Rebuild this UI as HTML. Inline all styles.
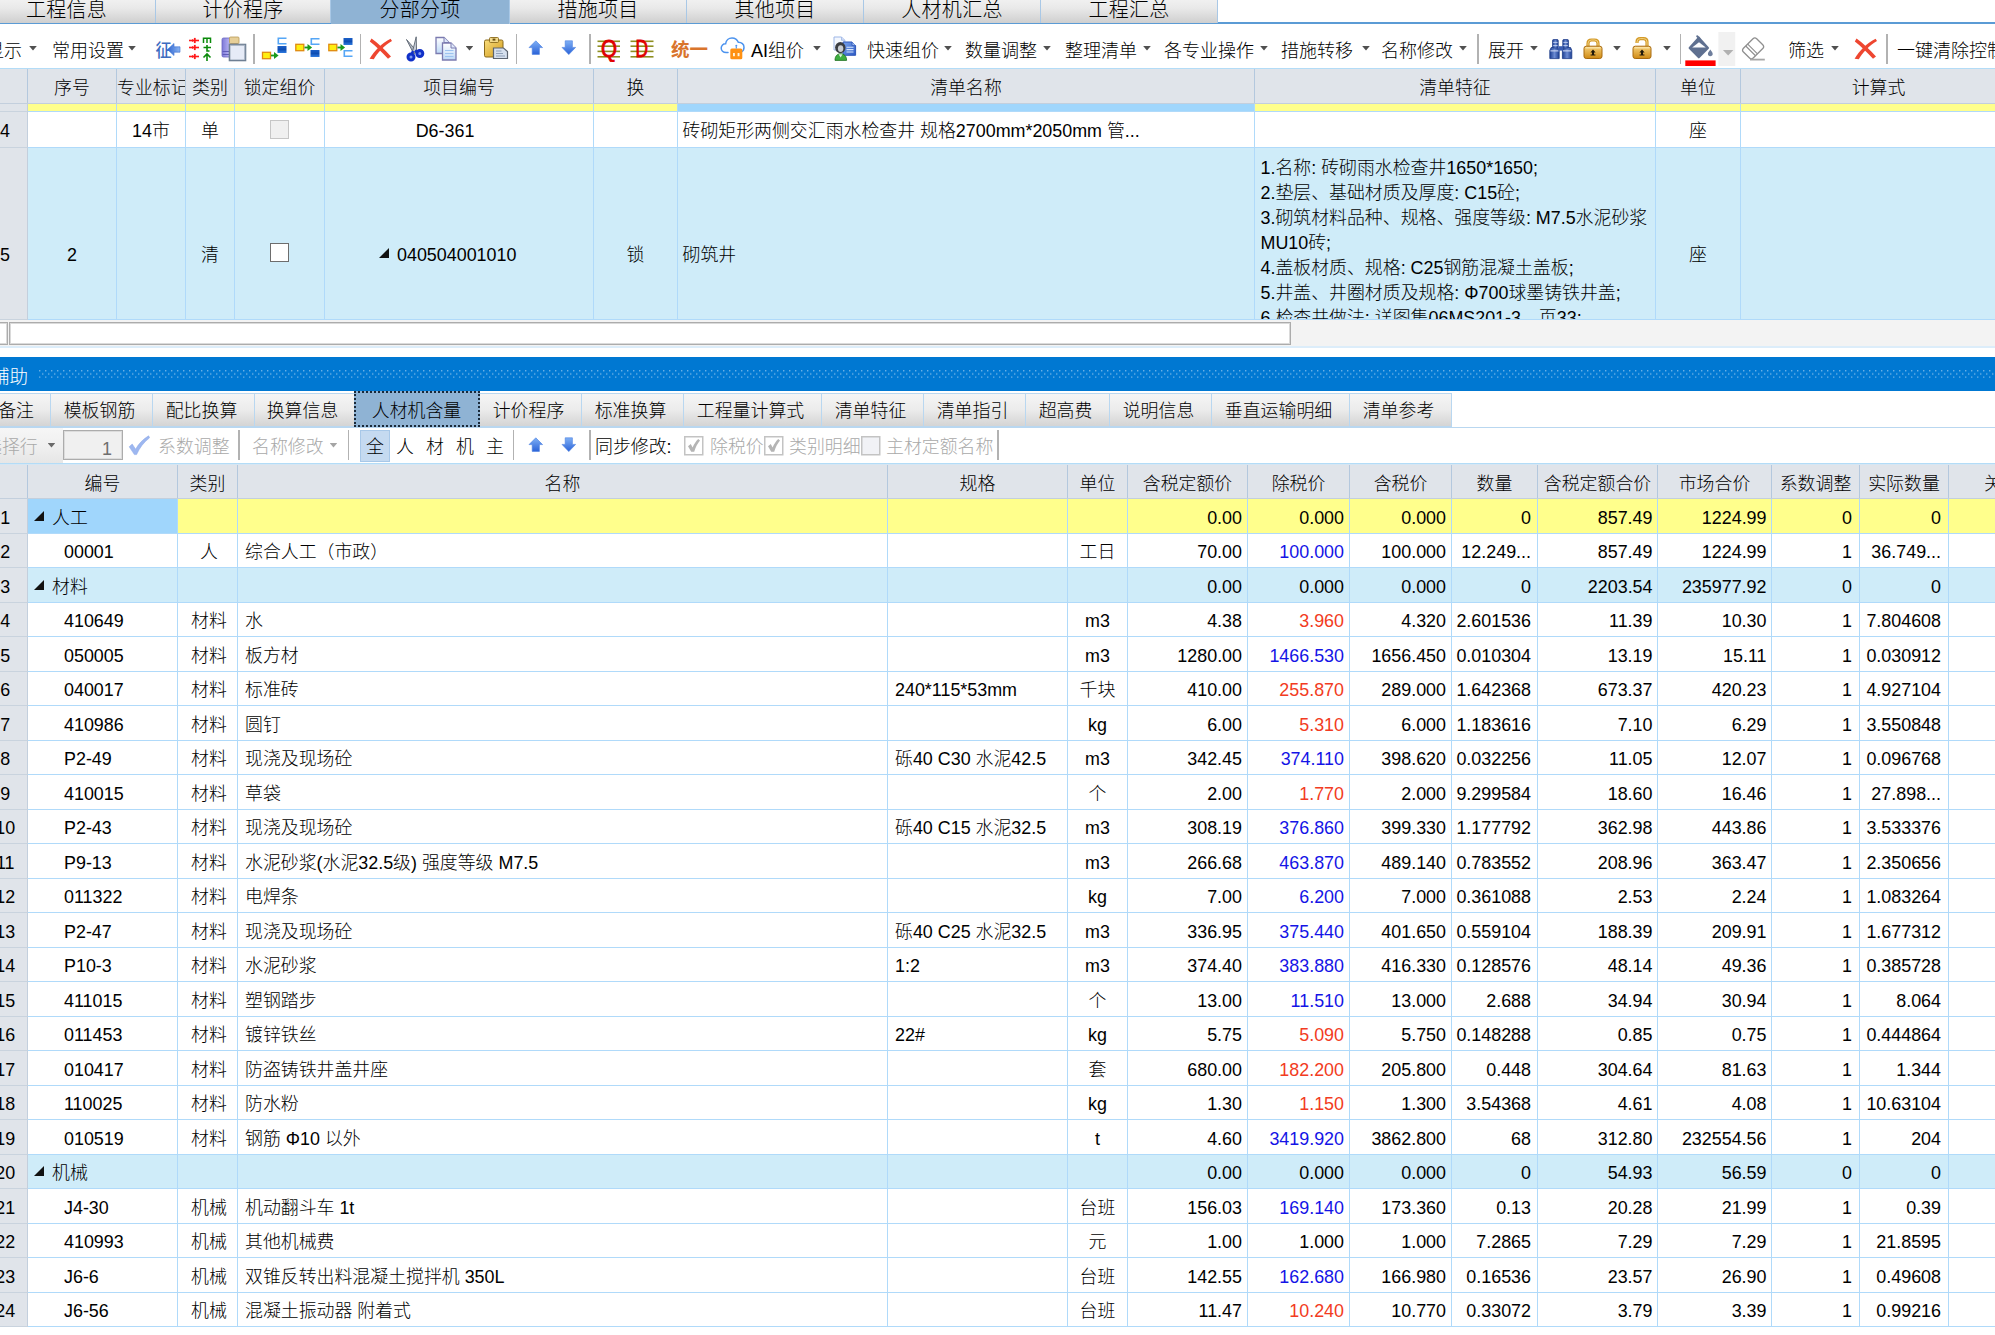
<!DOCTYPE html><html lang="zh-CN"><head><meta charset="utf-8"><title>分部分项</title><style>
*{box-sizing:border-box}
html,body{margin:0;padding:0}
body{width:1995px;height:1335px;overflow:hidden;position:relative;background:#fff;
 font-family:"Liberation Sans","Noto Sans CJK SC",sans-serif;font-size:17.9px;color:#000;line-height:1;font-weight:300}
.abs{position:absolute}
.t{position:absolute;white-space:nowrap}
/* top tabs */
.tab1{position:absolute;top:-4px;height:27px;background:linear-gradient(#f4f4f4,#e9e9e9 45%,#cfcfcf);border-right:1px solid #a9c8e6;
 font-size:20px;text-align:center;line-height:28px;letter-spacing:0.3px}
.tab1.sel{background:#8fb3d4;height:28px}
/* toolbar */
.tb{position:absolute;white-space:nowrap;font-size:18px;line-height:22px}
.dd{position:absolute;width:7.6px;height:4.6px;background:#555;clip-path:polygon(0 0,100% 0,50% 100%)}
.sep{position:absolute;width:2px;background:#b2b2b2}
/* grid */
.hd{position:absolute;background:#e0e4ea;border-right:1px solid #b4c8de;text-align:center;white-space:nowrap;overflow:hidden}
.c{position:absolute;border-right:1px solid #b0dafa;border-bottom:1px solid #b0dafa;white-space:nowrap;overflow:hidden}
.rh{position:absolute;left:0;width:28px;background:#e0e4ea;border-right:1px solid #c3cfdd;border-bottom:1px solid #c9d3de;white-space:nowrap;overflow:hidden}
.r{text-align:right;padding-right:6px}
.l{text-align:left;padding-left:7px}
.m{text-align:center}
.red{color:#f23b22}.blu{color:#1414e6}
.tri{display:inline-block;width:0;height:0;border-left:10px solid transparent;border-bottom:10px solid #111;margin-right:8px;vertical-align:3px}
.tab2{position:absolute;top:393px;height:34px;background:linear-gradient(#f5f5f5,#ececec 48%,#d4d4d4);border:1px solid #b9d7f0;border-left:none;
 text-align:center;line-height:35px;white-space:nowrap;overflow:hidden;padding-right:4px}
.gray{color:#a9a9a9}
</style></head><body>
<div class="abs" style="left:0;top:22px;width:1995px;height:2px;background:#5b9bd5"></div>
<div class="tab1" style="left:-22px;width:178px">工程信息</div>
<div class="tab1" style="left:156px;width:175px">计价程序</div>
<div class="tab1 sel" style="left:331px;width:179px">分部分项</div>
<div class="tab1" style="left:510px;width:177px">措施项目</div>
<div class="tab1" style="left:687px;width:177px">其他项目</div>
<div class="tab1" style="left:864px;width:177px">人材机汇总</div>
<div class="tab1" style="left:1041px;width:177px">工程汇总</div>
<div class="abs" style="left:0;top:68px;width:1995px;height:1px;background:#b3dcf7"></div>
<div class="tb " style="left:-14px;top:40px">显示</div>
<div class="dd" style="left:29.2px;top:46px;background:#505050"></div>
<div class="tb " style="left:52px;top:40px">常用设置</div>
<div class="dd" style="left:128.2px;top:46px;background:#505050"></div>
<div class="sep" style="left:253px;top:34px;height:30px;width:2px"></div>
<div class="sep" style="left:360px;top:34px;height:30px;width:1px"></div>
<div class="sep" style="left:516px;top:34px;height:30px;width:1px"></div>
<div class="sep" style="left:589px;top:34px;height:30px;width:2px"></div>
<div class="dd" style="left:465.7px;top:46px;background:#505050"></div>
<div class="tb" style="left:671px;top:39.3px;color:#d9742c;font-weight:bold;font-size:18.5px">统一</div>
<div class="tb " style="left:751px;top:40px">AI组价</div>
<div class="dd" style="left:813.2px;top:46px;background:#505050"></div>
<div class="tb " style="left:867px;top:40px">快速组价</div>
<div class="dd" style="left:944.2px;top:46px;background:#505050"></div>
<div class="tb " style="left:965px;top:40px">数量调整</div>
<div class="dd" style="left:1043.2px;top:46px;background:#505050"></div>
<div class="tb " style="left:1065px;top:40px">整理清单</div>
<div class="dd" style="left:1143.2px;top:46px;background:#505050"></div>
<div class="tb " style="left:1164px;top:40px">各专业操作</div>
<div class="dd" style="left:1260.2px;top:46px;background:#505050"></div>
<div class="tb " style="left:1281px;top:40px">措施转移</div>
<div class="dd" style="left:1362.2px;top:46px;background:#505050"></div>
<div class="tb " style="left:1381px;top:40px">名称修改</div>
<div class="dd" style="left:1459.2px;top:46px;background:#505050"></div>
<div class="sep" style="left:1477px;top:34px;height:30px;width:2px"></div>
<div class="tb " style="left:1488px;top:40px">展开</div>
<div class="dd" style="left:1530.2px;top:46px;background:#505050"></div>
<div class="dd" style="left:1613.2px;top:46px;background:#505050"></div>
<div class="dd" style="left:1663.2px;top:46px;background:#505050"></div>
<div class="sep" style="left:1680px;top:34px;height:30px;width:1px"></div>
<div class="dd" style="left:1723.2px;top:47px;background:#aaa"></div>
<div class="tb " style="left:1788px;top:40px">筛选</div>
<div class="dd" style="left:1831.2px;top:46px;background:#505050"></div>
<div class="sep" style="left:1886px;top:34px;height:30px;width:2px"></div>
<div class="tb " style="left:1897px;top:40px">一键清除控制价</div>
<svg width="0" height="0" style="position:absolute"><defs>
<linearGradient id="gBlue" x1="0" y1="0" x2="0" y2="1"><stop offset="0" stop-color="#7fb0f5"/><stop offset="1" stop-color="#2a62d8"/></linearGradient>
<linearGradient id="gBlueH" x1="0" y1="0" x2="1" y2="0"><stop offset="0" stop-color="#2f66d0"/><stop offset="1" stop-color="#8ab4f2"/></linearGradient>
<linearGradient id="gGold" x1="0" y1="0" x2="0" y2="1"><stop offset="0" stop-color="#f7d27a"/><stop offset="1" stop-color="#d08a14"/></linearGradient>
<linearGradient id="gGold2" x1="0" y1="0" x2="1" y2="1"><stop offset="0" stop-color="#f9dd7c"/><stop offset="1" stop-color="#d19a1a"/></linearGradient>
<linearGradient id="gBox" x1="0" y1="0" x2="0" y2="1"><stop offset="0" stop-color="#1b5fc8"/><stop offset="0.5" stop-color="#0d4db3"/><stop offset="1" stop-color="#2f7be0"/></linearGradient>
<linearGradient id="gBox2" x1="0" y1="0" x2="1" y2="1"><stop offset="0" stop-color="#7aa4ee"/><stop offset="1" stop-color="#2c59c4"/></linearGradient>
<linearGradient id="gPurp" x1="0" y1="0" x2="1" y2="0"><stop offset="0" stop-color="#7d78d8"/><stop offset="0.5" stop-color="#b7b4f2"/><stop offset="1" stop-color="#8a86d8"/></linearGradient>
<linearGradient id="gBino" x1="0" y1="0" x2="1" y2="0"><stop offset="0" stop-color="#1d3f93"/><stop offset="0.5" stop-color="#6c8bd2"/><stop offset="1" stop-color="#1d3f93"/></linearGradient>
<linearGradient id="gPage" x1="0" y1="0" x2="0" y2="1"><stop offset="0" stop-color="#ffffff"/><stop offset="1" stop-color="#bcd8f6"/></linearGradient>
</defs></svg><svg class="abs" style="left:155px;top:37px" width="27" height="24" viewBox="0 0 27 24" ><text x="0.5" y="19.5" font-size="18" font-weight="500" fill="#3d6cc0" font-family="Liberation Sans,Noto Sans CJK SC,sans-serif" textLength="16" lengthAdjust="spacingAndGlyphs">征</text><path d="M12.5 12.5 L19 6.5 L19 9.8 L25 9.8 L25 15.2 L19 15.2 L19 18.5 Z" fill="url(#gBlueH)" stroke="#3b6fd0" stroke-width="0.6"/></svg><svg class="abs" style="left:188px;top:37px" width="25" height="25" viewBox="0 0 25 25" ><path d="M1 3.5 H11" stroke="#ff1a1a" stroke-width="1.6"/><path d="M6.8 0.8999999999999999 V6.1" stroke="#ff1a1a" stroke-width="1.8"/><path d="M4 1.9 L6.5 3.5 L4 5.1Z" fill="#ff1a1a"/><path d="M1 10.5 H11" stroke="#ff1a1a" stroke-width="1.6"/><path d="M6.8 7.9 V13.1" stroke="#ff1a1a" stroke-width="1.8"/><path d="M4 8.9 L6.5 10.5 L4 12.1Z" fill="#ff1a1a"/><path d="M1 19.5 H11" stroke="#ff1a1a" stroke-width="1.6"/><path d="M6.8 16.9 V22.1" stroke="#ff1a1a" stroke-width="1.8"/><path d="M4 17.9 L6.5 19.5 L4 21.1Z" fill="#ff1a1a"/><path d="M15.5 6 V1.2 H22.5 V6 M19 1.2 V6" stroke="#0a8a0a" stroke-width="1.5" fill="none"/><path d="M15.5 10.5 H23 M19 8 V14 H21.5" stroke="#0a8a0a" stroke-width="1.6" fill="none"/><path d="M19 24 V17 M15.5 20.5 L19 17 L22.5 20.5" stroke="#0a8a0a" stroke-width="1.6" fill="none"/></svg><svg class="abs" style="left:221px;top:36px" width="26" height="26" viewBox="0 0 26 26" ><rect x="1" y="2" width="15" height="19" rx="1.5" fill="url(#gPurp)" stroke="#6a66c0" stroke-width="0.8"/><path d="M1.5 15.5 H12 M1.5 18.5 H12" stroke="#5f5bb8" stroke-width="1"/><rect x="8.5" y="1" width="9.5" height="6.5" rx="1" fill="#e7cf98" stroke="#b79a55" stroke-width="0.8"/><rect x="8.5" y="8.5" width="16" height="16" fill="#e6ebf7" stroke="#6e7f93" stroke-width="1.6"/><path d="M9.3 9.3 H23.7 V23.7" stroke="#a9b4c4" stroke-width="1" fill="none"/></svg><svg class="abs" style="left:261px;top:36px" width="27" height="26" viewBox="0 0 27 26" ><rect x="1.5" y="16.3" width="8" height="6.4" fill="#ffee10" stroke="#e08a10" stroke-width="1.3"/><path d="M10 19.5 H14" stroke="#1a9a1a" stroke-width="1.8"/><path d="M13 15.9 L17.6 19.5 L13 23.1Z" fill="#1a9a1a"/><path d="M25.5 2.3 H17.3 V7.7 H25.5" fill="none" stroke="#55a6f6" stroke-width="1.6"/><rect x="16.5" y="10" width="9" height="7" fill="url(#gBox)"/></svg><svg class="abs" style="left:294px;top:36px" width="27" height="26" viewBox="0 0 27 26" ><rect x="1.8" y="8.3" width="8" height="6.4" fill="#ffee10" stroke="#e08a10" stroke-width="1.3"/><path d="M10.5 11.5 H14.5" stroke="#1a9a1a" stroke-width="1.8"/><path d="M13.5 7.9 L18.1 11.5 L13.5 15.1Z" fill="#1a9a1a"/><path d="M25.5 2.8 H17.3 V8.2 H25.5" fill="none" stroke="#55a6f6" stroke-width="1.6"/><rect x="16.5" y="14" width="9" height="7" fill="url(#gBox)"/></svg><svg class="abs" style="left:327px;top:36px" width="27" height="26" viewBox="0 0 27 26" ><rect x="1.8" y="8.3" width="8" height="6.4" fill="#ffee10" stroke="#e08a10" stroke-width="1.3"/><path d="M10.5 11.5 H14.5" stroke="#1a9a1a" stroke-width="1.8"/><path d="M13.5 7.9 L18.1 11.5 L13.5 15.1Z" fill="#1a9a1a"/><rect x="16.5" y="2" width="9" height="7" fill="url(#gBox)"/><path d="M25.5 14.8 H17.3 V20.2 H25.5" fill="none" stroke="#55a6f6" stroke-width="1.6"/></svg><svg class="abs" style="left:369px;top:37px" width="24" height="23" viewBox="0 0 24 23" ><path d="M2.5 1.5 C9 6 16 13 22 19.5 L19 21.8 C13 15.5 7 9.5 0.8 4.6 Z" fill="#ee4630"/><path d="M23 4 C15.5 8.5 8 16 4.8 22.3 L0.6 21.8 C5.5 13.5 13 6 21.6 1.8 Z" fill="#ee4630"/></svg><svg class="abs" style="left:404px;top:36px" width="21" height="26" viewBox="0 0 21 26" ><path d="M2.5 3.5 L13 15.5 L9.8 17.8 Z" fill="#aeb6c2" stroke="#5b6470" stroke-width="0.9"/><path d="M12.2 0.8 L12.6 16 L8.4 16 Z" fill="#c8ced8" stroke="#5b6470" stroke-width="0.9"/><circle cx="7" cy="21" r="3" fill="#7d9af0" stroke="#1030c8" stroke-width="3"/><circle cx="15.8" cy="17.5" r="3" fill="#7d9af0" stroke="#1030c8" stroke-width="3"/><path d="M9 15 L7.5 18.5 M11 14.5 L13.5 16.5" stroke="#1030c8" stroke-width="2.4"/></svg><svg class="abs" style="left:435px;top:36px" width="23" height="26" viewBox="0 0 23 26" ><path d="M1 1.5 H9 L14 6.5 V17.5 H1 Z" fill="url(#gPage)" stroke="#7b7bb0" stroke-width="1.3"/><path d="M9 1.5 V6.5 H14" fill="#dfe9fb" stroke="#7b7bb0" stroke-width="1"/><path d="M7.5 7 H16.0 L21.0 12 V24 H7.5 Z" fill="url(#gPage)" stroke="#7b7bb0" stroke-width="1.3"/><path d="M16.0 7 V12 H21.0" fill="#dfe9fb" stroke="#7b7bb0" stroke-width="1"/><path d="M10 14.5 H18.5 M10 17.5 H18.5 M10 20.5 H18.5" stroke="#9cc3f0" stroke-width="1.2"/></svg><svg class="abs" style="left:483px;top:36px" width="26" height="25" viewBox="0 0 26 25" ><rect x="1.5" y="4" width="18.5" height="17" rx="1.5" fill="url(#gGold2)" stroke="#8a6a1a" stroke-width="1"/><rect x="6.5" y="1.5" width="9" height="5" rx="1" fill="#f1d98a" stroke="#8a6a1a" stroke-width="0.9"/><rect x="9.6" y="2.6" width="2.8" height="2" fill="#6b5010"/><path d="M10.5 12 H20.5 L24.5 15.5 V22.5 H10.5 Z" fill="#d6e0ee" stroke="#5c6470" stroke-width="1.2"/><path d="M13 15 H18.5 M13 17.5 H20 M13 20 H22" stroke="#8fa0b8" stroke-width="1"/></svg><svg class="abs" style="left:528px;top:40.2px" width="16" height="15" viewBox="0 0 16 15" ><path d="M7.8 0.8 L14.6 7.6 H11.4 V14.4 H4.2 V7.6 H1 Z" fill="url(#gBlue)" stroke="#4a7fe0" stroke-width="0.6"/></svg><svg class="abs" style="left:561px;top:40.2px" width="16" height="15" viewBox="0 0 16 15" ><path d="M7.8 14.6 L14.6 7.4 H11.4 V0.8 H4.2 V7.4 H1 Z" fill="url(#gBlue)" stroke="#4a7fe0" stroke-width="0.6"/></svg><svg class="abs" style="left:597px;top:36px" width="24" height="26" viewBox="0 0 24 26" ><path d="M0.5 5.3 H23" stroke="#8e8e20" stroke-width="1.6"/><path d="M0.5 10.2 H23" stroke="#8e8e20" stroke-width="1.6"/><path d="M0.5 15.4 H23" stroke="#8e8e20" stroke-width="1.6"/><path d="M0.5 20.8 H23" stroke="#8e8e20" stroke-width="1.6"/><text x="4" y="20.6" font-size="23.5" font-weight="normal" stroke="#e00000" stroke-width="0.9" fill="#e00000" font-family="Liberation Sans,sans-serif" textLength="16" lengthAdjust="spacingAndGlyphs">Q</text></svg><svg class="abs" style="left:630px;top:36px" width="24" height="26" viewBox="0 0 24 26" ><path d="M0.5 5.3 H23.5" stroke="#8e8e20" stroke-width="1.6"/><path d="M0.5 10.2 H23.5" stroke="#8e8e20" stroke-width="1.6"/><path d="M0.5 15.4 H23.5" stroke="#8e8e20" stroke-width="1.6"/><path d="M0.5 20.8 H23.5" stroke="#8e8e20" stroke-width="1.6"/><text x="5.5" y="20.6" font-size="23.5" font-weight="normal" stroke="#e00000" stroke-width="0.9" fill="#e00000" font-family="Liberation Sans,sans-serif" textLength="12.5" lengthAdjust="spacingAndGlyphs">D</text></svg><svg class="abs" style="left:719.7px;top:36px" width="26" height="25" viewBox="0 0 26 25" ><path d="M8 16.5 H6.2 C3 16.5 1.2 14.3 1.2 12 C1.2 9.5 3.2 7.7 5.6 7.8 C6 4.3 8.8 2 12 2 C15 2 17.3 3.7 18.3 6.3 C21.6 6.2 24 8.4 24 11.3 C24 13.6 22.6 15.3 21.6 15.8" fill="none" stroke="#4c93ee" stroke-width="1.5" stroke-linecap="round"/><rect x="10.3" y="12.6" width="12" height="10.6" rx="1.5" fill="#ff9112"/><path d="M16.3 12.6 V10.4" stroke="#4c93ee" stroke-width="1.2"/><circle cx="16.3" cy="9.8" r="1" fill="#4c93ee"/><rect x="13" y="17" width="1.9" height="3.2" fill="#fff3da"/><rect x="17.6" y="17" width="1.9" height="3.2" fill="#fff3da"/></svg><svg class="abs" style="left:832px;top:35px" width="26" height="26" viewBox="0 0 26 26" ><path d="M2 2 H9.5 L12.8 5.3 V15 H2 Z" fill="#f3f7fe" stroke="#9db6e6" stroke-width="1"/><path d="M9.5 2 V5.3 H12.8" fill="#cfdcf6" stroke="#9db6e6" stroke-width="0.8"/><path d="M11 7 H20 L23.6 10.6 V20.3 H11 Z" fill="url(#gBox2)" stroke="#2f57b8" stroke-width="1"/><path d="M20 7 V10.6 H23.6" fill="#9dbbf0" stroke="#2f57b8" stroke-width="0.8"/><path d="M14.5 12.2 H21.5 M14.5 14.6 H21.5 M14.5 17 H21.5" stroke="#d8e6fb" stroke-width="1.1"/><ellipse cx="8.3" cy="12.6" rx="5.2" ry="5.6" fill="#3a3d42"/><ellipse cx="8.6" cy="13.6" rx="2.7" ry="3.4" fill="#c9cdd2"/><path d="M3 25.4 C3 21 5.2 18.8 8.6 18.8 C12 18.8 14.6 21 14.6 25.4 Z" fill="#3fae40" stroke="#1e6e20" stroke-width="0.8"/><path d="M6.6 19.2 L8.6 22.4 L10.6 19.2" fill="#dff3dc"/></svg><svg class="abs" style="left:1548.7px;top:38px" width="24" height="22" viewBox="0 0 24 22" ><path d="M2.2 9.5 H9.0 L10.2 12.5 V20.6 H0.8 V12.5 Z" fill="url(#gBino)" stroke="#1b3a88" stroke-width="0.8"/><rect x="3.6" y="1.6" width="5.6" height="8.4" rx="0.8" fill="url(#gBino)" stroke="#1b3a88" stroke-width="0.8"/><path d="M4.2 4.4 H8.6 M4.2 7.6 H8.6" stroke="#c9d6f4" stroke-width="0.9"/><path d="M1.4 12.9 H9.6" stroke="#dbe4f8" stroke-width="1"/><path d="M14.799999999999999 9.5 H21.6 L22.799999999999997 12.5 V20.6 H13.399999999999999 V12.5 Z" fill="url(#gBino)" stroke="#1b3a88" stroke-width="0.8"/><rect x="13.8" y="1.6" width="5.6" height="8.4" rx="0.8" fill="url(#gBino)" stroke="#1b3a88" stroke-width="0.8"/><path d="M14.4 4.4 H18.8 M14.4 7.6 H18.8" stroke="#c9d6f4" stroke-width="0.9"/><path d="M14.0 12.9 H22.2" stroke="#dbe4f8" stroke-width="1"/><rect x="9.4" y="8.2" width="4.6" height="4.4" fill="#3a5cb0"/></svg><svg class="abs" style="left:1583px;top:37.6px" width="21" height="22" viewBox="0 0 21 22" ><path d="M5 9 V5.4 Q5 2 8.4 2 H11.6 Q15 2 15 5.4 V9" fill="none" stroke="#d39a28" stroke-width="3.2"/><path d="M5 9 V5.4 Q5 2 8.4 2 H11.6 Q15 2 15 5.4 V9" fill="none" stroke="#f5d78a" stroke-width="0.9"/><rect x="1" y="8.2" width="18" height="12.3" rx="2.2" fill="url(#gGold)" stroke="#a86a10" stroke-width="1"/><path d="M2.6 9.799999999999999 H17.4" stroke="#fbe7ae" stroke-width="1.2"/><path d="M10 11.399999999999999 L12.6 14.399999999999999 H11 V16.4 H12.4 V17.6 H7.6 V16.4 H9 V14.399999999999999 H7.4 Z" fill="#20180a"/></svg><svg class="abs" style="left:1632px;top:36.6px" width="21" height="23" viewBox="0 0 21 23" ><path d="M15 10 V5 Q15 1.6 11.6 1.6 H8.4 Q5 1.6 5 5 V6" fill="none" stroke="#d39a28" stroke-width="3.2"/><path d="M15 10 V5 Q15 1.6 11.6 1.6 H8.4 Q5 1.6 5 5 V6" fill="none" stroke="#f5d78a" stroke-width="0.9"/><rect x="1" y="9.2" width="18" height="12.3" rx="2.2" fill="url(#gGold)" stroke="#a86a10" stroke-width="1"/><path d="M2.6 10.799999999999999 H17.4" stroke="#fbe7ae" stroke-width="1.2"/><path d="M10 12.399999999999999 L12.6 15.399999999999999 H11 V17.4 H12.4 V18.6 H7.6 V17.4 H9 V15.399999999999999 H7.4 Z" fill="#20180a"/></svg><svg class="abs" style="left:1685px;top:32px" width="51" height="34" viewBox="0 0 51 34" ><rect x="33.4" y="0" width="16.8" height="34" fill="#f1f1f1"/><path d="M13.8 5.6 L23 16 L13.8 25.4 L4.6 16 Z" fill="#5f7090" stroke="#5f7090" stroke-width="2" stroke-linejoin="round"/><path d="M14 10.2 L20.8 15.4 H7.2 Z" fill="#fbfcfe"/><path d="M12.2 4.2 L14.4 6.4" stroke="#5f7090" stroke-width="2" stroke-linecap="round"/><path d="M25.3 17.6 C26.8 19.8 27.7 20.8 27.7 22 C27.7 23.3 26.7 24.2 25.3 24.2 C23.9 24.2 22.9 23.3 22.9 22 C22.9 20.8 23.8 19.8 25.3 17.6 Z" fill="#6e7e9c"/><rect x="0.3" y="28.4" width="30.3" height="5.6" fill="#ff0000"/><path d="M37.9 18 H48.4 L43.15 23.6 Z" fill="#b1b1b1"/></svg><svg class="abs" style="left:1740px;top:36px" width="26" height="26" viewBox="0 0 26 26" ><g transform="rotate(-45 13.1 12.4)"><rect x="3.75" y="5.5" width="18.7" height="13.8" rx="2.6" fill="#fff" stroke="#8f8f8f" stroke-width="1.3"/><path d="M9.6 5.5 V19.3 M12.4 5.5 V19.3" stroke="#8f8f8f" stroke-width="1.1"/></g><path d="M10 23.6 H24.8" stroke="#a6a6a6" stroke-width="1.8"/></svg><svg class="abs" style="left:1854px;top:37px" width="24" height="23" viewBox="0 0 24 23" ><path d="M2.5 1.5 C9 6 16 13 22 19.5 L19 21.8 C13 15.5 7 9.5 0.8 4.6 Z" fill="#ee4630"/><path d="M23 4 C15.5 8.5 8 16 4.8 22.3 L0.6 21.8 C5.5 13.5 13 6 21.6 1.8 Z" fill="#ee4630"/></svg>
<div class="abs" style="left:0;top:69px;width:1995px;height:35px;background:#e0e4ea;border-bottom:1px solid #c3cfdd"></div>
<div class="hd" style="left:0px;top:69px;width:28px;height:34px;line-height:39px;"></div>
<div class="hd" style="left:28px;top:69px;width:89px;height:34px;line-height:39px;">序号</div>
<div class="hd" style="left:117px;top:69px;width:69px;height:34px;line-height:39px;text-align:left;">专业标记</div>
<div class="hd" style="left:186px;top:69px;width:49px;height:34px;line-height:39px;">类别</div>
<div class="hd" style="left:235px;top:69px;width:90px;height:34px;line-height:39px;">锁定组价</div>
<div class="hd" style="left:325px;top:69px;width:269px;height:34px;line-height:39px;">项目编号</div>
<div class="hd" style="left:594px;top:69px;width:84px;height:34px;line-height:39px;">换</div>
<div class="hd" style="left:678px;top:69px;width:577px;height:34px;line-height:39px;">清单名称</div>
<div class="hd" style="left:1255px;top:69px;width:401px;height:34px;line-height:39px;">清单特征</div>
<div class="hd" style="left:1656px;top:69px;width:85px;height:34px;line-height:39px;">单位</div>
<div class="hd" style="left:1741px;top:69px;width:276px;height:34px;line-height:39px;">计算式</div>
<div class="rh" style="top:104px;height:8px;line-height:8px"></div>
<div class="c " style="left:28px;top:104px;width:89px;height:8px;line-height:8px;background:#ffff8c;"></div>
<div class="c " style="left:117px;top:104px;width:69px;height:8px;line-height:8px;background:#ffff8c;"></div>
<div class="c " style="left:186px;top:104px;width:49px;height:8px;line-height:8px;background:#ffff8c;"></div>
<div class="c " style="left:235px;top:104px;width:90px;height:8px;line-height:8px;background:#ffff8c;"></div>
<div class="c " style="left:325px;top:104px;width:269px;height:8px;line-height:8px;background:#ffff8c;"></div>
<div class="c " style="left:594px;top:104px;width:84px;height:8px;line-height:8px;background:#ffff8c;"></div>
<div class="c " style="left:678px;top:104px;width:577px;height:8px;line-height:8px;background:#ffff8c;background:#a0d6fc"></div>
<div class="c " style="left:1255px;top:104px;width:401px;height:8px;line-height:8px;background:#ffff8c;"></div>
<div class="c " style="left:1656px;top:104px;width:85px;height:8px;line-height:8px;background:#ffff8c;"></div>
<div class="c " style="left:1741px;top:104px;width:276px;height:8px;line-height:8px;background:#ffff8c;"></div>
<div class="rh" style="top:112px;height:36px;line-height:39px">4</div>
<div class="c m" style="left:28px;top:112px;width:89px;height:36px;line-height:39px;background:#fff;"></div>
<div class="c m" style="left:117px;top:112px;width:69px;height:36px;line-height:39px;background:#fff;">14市</div>
<div class="c m" style="left:186px;top:112px;width:49px;height:36px;line-height:39px;background:#fff;">单</div>
<div class="c m" style="left:235px;top:112px;width:90px;height:36px;line-height:39px;background:#fff;"><span style="display:inline-block;width:18.5px;height:18.5px;border:1px solid #c6c6c6;background:#f0f0f0;vertical-align:-1.5px"></span></div>
<div class="c m" style="left:325px;top:112px;width:269px;height:36px;line-height:39px;background:#fff;padding-right:28px;">D6-361</div>
<div class="c m" style="left:594px;top:112px;width:84px;height:36px;line-height:39px;background:#fff;"></div>
<div class="c l" style="left:678px;top:112px;width:577px;height:36px;line-height:39px;background:#fff;padding-left:4.5px;">砖砌矩形两侧交汇雨水检查井 规格2700mm*2050mm 管...</div>
<div class="c l" style="left:1255px;top:112px;width:401px;height:36px;line-height:39px;background:#fff;"></div>
<div class="c m" style="left:1656px;top:112px;width:85px;height:36px;line-height:39px;background:#fff;">座</div>
<div class="c " style="left:1741px;top:112px;width:276px;height:36px;line-height:39px;background:#fff;"></div>
<div class="rh" style="top:148px;height:172px;line-height:215px">5</div>
<div class="c m" style="left:28px;top:148px;width:89px;height:172px;line-height:215px;background:#cfecf9;">2</div>
<div class="c m" style="left:117px;top:148px;width:69px;height:172px;line-height:215px;background:#cfecf9;"></div>
<div class="c m" style="left:186px;top:148px;width:49px;height:172px;line-height:215px;background:#cfecf9;">清</div>
<div class="c m" style="left:235px;top:148px;width:90px;height:172px;line-height:215px;background:#cfecf9;"><span style="display:inline-block;width:18.5px;height:18.5px;border:1px solid #6d6d6d;background:#fff;vertical-align:-0.5px"></span></div>
<div class="c l" style="left:325px;top:148px;width:269px;height:172px;line-height:215px;background:#cfecf9;padding-left:54px;"><span class="tri" style="margin-right:8px"></span>040504001010</div>
<div class="c m" style="left:594px;top:148px;width:84px;height:172px;line-height:215px;background:#cfecf9;">锁</div>
<div class="c l" style="left:678px;top:148px;width:577px;height:172px;line-height:215px;background:#cfecf9;padding-left:4.5px;">砌筑井</div>
<div class="c l" style="left:1255px;top:148px;width:401px;height:172px;line-height:215px;background:#cfecf9;line-height:25px;padding-left:5.5px;"><div style="line-height:25.1px;padding-top:7.5px;white-space:nowrap">1.名称: 砖砌雨水检查井1650*1650;<br>2.垫层、基础材质及厚度: C15砼;<br>3.砌筑材料品种、规格、强度等级: M7.5水泥砂浆<br>MU10砖;<br>4.盖板材质、规格: C25钢筋混凝土盖板;<br>5.井盖、井圈材质及规格: Φ700球墨铸铁井盖;<br>6.检查井做法: 详图集06MS201-3、页33;<br>7.其他</div></div>
<div class="c m" style="left:1656px;top:148px;width:85px;height:172px;line-height:215px;background:#cfecf9;">座</div>
<div class="c " style="left:1741px;top:148px;width:276px;height:172px;line-height:215px;background:#cfecf9;"></div>
<div class="abs" style="left:0;top:320px;width:1995px;height:28px;background:#f3f3f3;border-bottom:2px solid #dcedfa"></div>
<div class="abs" style="left:-4px;top:322px;width:12px;height:23px;background:#fff;border:1px solid #acacac;box-shadow:inset 0 0 0 1px #dadada"></div>
<div class="abs" style="left:9px;top:322px;width:1282px;height:23px;background:#fff;border:1px solid #acacac;box-shadow:inset 0 0 0 1px #dadada"></div>
<div class="abs" style="left:0;top:357px;width:1995px;height:34px;background:#0078d2"></div>
<svg class="abs" style="left:39px;top:370px" width="1956" height="8"><defs><pattern id="dots" width="6" height="6.5" patternUnits="userSpaceOnUse"><rect x="0" y="0" width="1.4" height="1.4" fill="#fff" fill-opacity=".42"/><rect x="3" y="3.25" width="1.4" height="1.4" fill="#fff" fill-opacity=".42"/></pattern></defs><rect width="1956" height="8" fill="url(#dots)"/></svg>
<div class="t" style="left:-9px;top:368px;color:#fff;font-size:18.5px">辅助</div>
<div class="abs" style="left:0;top:427px;width:1995px;height:1px;background:#b9d7f0"></div>
<div class="tab2" style="left:-40px;width:91px;text-align:right;padding-right:16px">备注</div>
<div class="tab2" style="left:51px;width:102px">模板钢筋</div>
<div class="tab2" style="left:153px;width:102px">配比换算</div>
<div class="tab2" style="left:255px;width:100px">换算信息</div>
<div class="tab2" style="left:354px;width:126px;top:391px;height:36px;background:#8fb3d4;border:2px dotted #1a2a3a;line-height:37px;z-index:2;padding-right:1px">人材机含量</div>
<div class="tab2" style="left:480px;width:102px">计价程序</div>
<div class="tab2" style="left:582px;width:102px">标准换算</div>
<div class="tab2" style="left:684px;width:138px">工程量计算式</div>
<div class="tab2" style="left:822px;width:102px">清单特征</div>
<div class="tab2" style="left:924px;width:102px">清单指引</div>
<div class="tab2" style="left:1026px;width:84px">超高费</div>
<div class="tab2" style="left:1110px;width:102px">说明信息</div>
<div class="tab2" style="left:1212px;width:138px">垂直运输明细</div>
<div class="tab2" style="left:1350px;width:102px">清单参考</div>
<div class="abs" style="left:0;top:463px;width:1995px;height:1px;background:#b3dcf7"></div>
<div class="abs" style="left:0;top:428px;width:63px;height:35px;background:linear-gradient(#f6f6f6,#f0f0f0 50%,#e6e6e6)"></div>
<div class="t gray" style="left:-16px;top:439px">选择行</div>
<div class="dd" style="left:47.7px;top:443px;background:#6a6a6a"></div>
<div class="abs" style="left:63px;top:430px;width:60px;height:30px;background:#f0f0f0;border:1px solid #acacac;box-shadow:inset 0 0 0 1px #dcdcdc;text-align:right;padding:10px 10px 0 0;color:#6e6e6e">1</div>
<div class="t gray" style="left:158px;top:439px">系数调整</div>
<div class="sep" style="left:238px;top:430px;height:30px;width:2px"></div>
<div class="t gray" style="left:252px;top:439px">名称修改</div>
<div class="dd" style="left:329.7px;top:443px;background:#a5a5a5"></div>
<div class="sep" style="left:348px;top:430px;height:30px;width:1px"></div>
<div class="abs" style="left:360px;top:430px;width:30px;height:32px;background:#c5daf0;border:1px solid #a8c8e8"></div>
<div class="t" style="left:366px;top:439px">全</div>
<div class="t" style="left:396px;top:439px">人</div>
<div class="t" style="left:426px;top:439px">材</div>
<div class="t" style="left:456px;top:439px">机</div>
<div class="t" style="left:486px;top:439px">主</div>
<div class="sep" style="left:513px;top:430px;height:30px;width:1px"></div>
<div class="sep" style="left:589px;top:430px;height:30px;width:2px"></div>
<div class="t" style="left:595px;top:439px">同步修改:</div>
<div class="t gray" style="left:710px;top:439px">除税价</div>
<div class="t gray" style="left:789px;top:439px">类别明细</div>
<div class="t gray" style="left:886px;top:439px">主材定额名称</div>
<div class="sep" style="left:997px;top:430px;height:30px;width:2px"></div>
<svg class="abs" style="left:128px;top:435px" width="23" height="21" viewBox="0 0 23 21" ><path d="M1.2 11.8 L4.2 9 L7.6 14.2 C10.5 8.8 15 4.2 20.6 0.8 L21.6 2.8 C16 7 11.5 12.8 8.6 19.6 L6.4 19.6 Z" fill="#9db7f0" stroke="#8aa6e6" stroke-width="0.5"/></svg><svg class="abs" style="left:528px;top:437.2px" width="16" height="15" viewBox="0 0 16 15" ><path d="M7.8 0.8 L14.6 7.6 H11.4 V14.4 H4.2 V7.6 H1 Z" fill="url(#gBlue)" stroke="#4a7fe0" stroke-width="0.6"/></svg><svg class="abs" style="left:561px;top:437.2px" width="16" height="15" viewBox="0 0 16 15" ><path d="M7.8 14.6 L14.6 7.4 H11.4 V0.8 H4.2 V7.4 H1 Z" fill="url(#gBlue)" stroke="#4a7fe0" stroke-width="0.6"/></svg><svg class="abs" style="left:684px;top:435.5px" width="20" height="20" viewBox="0 0 20 20" ><rect x="0.75" y="0.75" width="18" height="18" fill="#fff" stroke="#c3c3c3" stroke-width="1.5"/><path d="M4 10.2 L6.8 8 L8.6 11.4 C10 8.2 11.8 5.4 14.2 3 L16 4.6 C13.4 7.8 11.6 11.2 10.2 15.8 L7.2 15.8 Z" fill="#b4b4b4"/></svg><svg class="abs" style="left:763.5px;top:435.5px" width="20" height="20" viewBox="0 0 20 20" ><rect x="0.75" y="0.75" width="18" height="18" fill="#fff" stroke="#c3c3c3" stroke-width="1.5"/><path d="M4 10.2 L6.8 8 L8.6 11.4 C10 8.2 11.8 5.4 14.2 3 L16 4.6 C13.4 7.8 11.6 11.2 10.2 15.8 L7.2 15.8 Z" fill="#b4b4b4"/></svg><svg class="abs" style="left:861px;top:435.5px" width="20" height="20" viewBox="0 0 20 20" ><rect x="0.75" y="0.75" width="18" height="18" fill="#f1f2f6" stroke="#c3c3c3" stroke-width="1.5"/></svg>
<div class="abs" style="left:0;top:464px;width:1995px;height:35px;background:#e0e4ea;border-bottom:1px solid #c3cfdd;border-top:1px solid #d6e6f3"></div>
<div class="hd" style="left:0px;top:465px;width:28px;height:33px;line-height:39px;"></div>
<div class="hd" style="left:28px;top:465px;width:150px;height:33px;line-height:39px;">编号</div>
<div class="hd" style="left:178px;top:465px;width:60px;height:33px;line-height:39px;">类别</div>
<div class="hd" style="left:238px;top:465px;width:650px;height:33px;line-height:39px;">名称</div>
<div class="hd" style="left:888px;top:465px;width:180px;height:33px;line-height:39px;">规格</div>
<div class="hd" style="left:1068px;top:465px;width:60px;height:33px;line-height:39px;">单位</div>
<div class="hd" style="left:1128px;top:465px;width:120px;height:33px;line-height:39px;">含税定额价</div>
<div class="hd" style="left:1248px;top:465px;width:102px;height:33px;line-height:39px;">除税价</div>
<div class="hd" style="left:1350px;top:465px;width:102px;height:33px;line-height:39px;">含税价</div>
<div class="hd" style="left:1452px;top:465px;width:86px;height:33px;line-height:39px;">数量</div>
<div class="hd" style="left:1538px;top:465px;width:120px;height:33px;line-height:39px;">含税定额合价</div>
<div class="hd" style="left:1658px;top:465px;width:114px;height:33px;line-height:39px;">市场合价</div>
<div class="hd" style="left:1772px;top:465px;width:88px;height:33px;line-height:39px;">系数调整</div>
<div class="hd" style="left:1860px;top:465px;width:89px;height:33px;line-height:39px;">实际数量</div>
<div class="hd" style="left:1949px;top:465px;width:92px;height:33px;line-height:39px;text-align:left;padding-left:35px;">关联</div>
<div class="rh" style="top:499px;height:35px;line-height:38px;text-align:right;padding-right:9px"><span style="position:absolute;left:-14.8px;width:40px;text-align:center">1</span></div>
<div class="c l" style="left:28px;top:499px;width:150px;height:35px;line-height:38px;background:#ffff8c;padding-left:6px;background:#a0d6fc;"><span class="tri"></span>人工</div>
<div class="c m" style="left:178px;top:499px;width:60px;height:35px;line-height:38px;background:#ffff8c;padding-left:3px;"></div>
<div class="c l" style="left:238px;top:499px;width:650px;height:35px;line-height:38px;background:#ffff8c;"></div>
<div class="c l" style="left:888px;top:499px;width:180px;height:35px;line-height:38px;background:#ffff8c;"></div>
<div class="c m" style="left:1068px;top:499px;width:60px;height:35px;line-height:38px;background:#ffff8c;"></div>
<div class="c r" style="left:1128px;top:499px;width:120px;height:35px;line-height:38px;background:#ffff8c;padding-right:5px;">0.00</div>
<div class="c r" style="left:1248px;top:499px;width:102px;height:35px;line-height:38px;background:#ffff8c;padding-right:5px;">0.000</div>
<div class="c r" style="left:1350px;top:499px;width:102px;height:35px;line-height:38px;background:#ffff8c;padding-right:5px;">0.000</div>
<div class="c r" style="left:1452px;top:499px;width:86px;height:35px;line-height:38px;background:#ffff8c;">0</div>
<div class="c r" style="left:1538px;top:499px;width:120px;height:35px;line-height:38px;background:#ffff8c;padding-right:4.5px;">857.49</div>
<div class="c r" style="left:1658px;top:499px;width:114px;height:35px;line-height:38px;background:#ffff8c;padding-right:4.5px;">1224.99</div>
<div class="c r" style="left:1772px;top:499px;width:88px;height:35px;line-height:38px;background:#ffff8c;padding-right:7px;">0</div>
<div class="c r" style="left:1860px;top:499px;width:89px;height:35px;line-height:38px;background:#ffff8c;padding-right:7px;">0</div>
<div class="c r" style="left:1949px;top:499px;width:92px;height:35px;line-height:38px;background:#ffff8c;"></div>
<div class="rh" style="top:534px;height:34px;line-height:37px;text-align:right;padding-right:9px"><span style="position:absolute;left:-14.8px;width:40px;text-align:center">2</span></div>
<div class="c l" style="left:28px;top:534px;width:150px;height:34px;line-height:37px;background:#fff;padding-left:36px;">00001</div>
<div class="c m" style="left:178px;top:534px;width:60px;height:34px;line-height:37px;background:#fff;padding-left:3px;">人</div>
<div class="c l" style="left:238px;top:534px;width:650px;height:34px;line-height:37px;background:#fff;">综合人工（市政）</div>
<div class="c l" style="left:888px;top:534px;width:180px;height:34px;line-height:37px;background:#fff;"></div>
<div class="c m" style="left:1068px;top:534px;width:60px;height:34px;line-height:37px;background:#fff;">工日</div>
<div class="c r" style="left:1128px;top:534px;width:120px;height:34px;line-height:37px;background:#fff;padding-right:5px;">70.00</div>
<div class="c r blu" style="left:1248px;top:534px;width:102px;height:34px;line-height:37px;background:#fff;padding-right:5px;">100.000</div>
<div class="c r" style="left:1350px;top:534px;width:102px;height:34px;line-height:37px;background:#fff;padding-right:5px;">100.000</div>
<div class="c r" style="left:1452px;top:534px;width:86px;height:34px;line-height:37px;background:#fff;">12.249...</div>
<div class="c r" style="left:1538px;top:534px;width:120px;height:34px;line-height:37px;background:#fff;padding-right:4.5px;">857.49</div>
<div class="c r" style="left:1658px;top:534px;width:114px;height:34px;line-height:37px;background:#fff;padding-right:4.5px;">1224.99</div>
<div class="c r" style="left:1772px;top:534px;width:88px;height:34px;line-height:37px;background:#fff;padding-right:7px;">1</div>
<div class="c r" style="left:1860px;top:534px;width:89px;height:34px;line-height:37px;background:#fff;padding-right:7px;">36.749...</div>
<div class="c r" style="left:1949px;top:534px;width:92px;height:34px;line-height:37px;background:#fff;"></div>
<div class="rh" style="top:568px;height:35px;line-height:38px;text-align:right;padding-right:9px"><span style="position:absolute;left:-14.8px;width:40px;text-align:center">3</span></div>
<div class="c l" style="left:28px;top:568px;width:150px;height:35px;line-height:38px;background:#cfecf9;padding-left:6px;"><span class="tri"></span>材料</div>
<div class="c m" style="left:178px;top:568px;width:60px;height:35px;line-height:38px;background:#cfecf9;padding-left:3px;"></div>
<div class="c l" style="left:238px;top:568px;width:650px;height:35px;line-height:38px;background:#cfecf9;"></div>
<div class="c l" style="left:888px;top:568px;width:180px;height:35px;line-height:38px;background:#cfecf9;"></div>
<div class="c m" style="left:1068px;top:568px;width:60px;height:35px;line-height:38px;background:#cfecf9;"></div>
<div class="c r" style="left:1128px;top:568px;width:120px;height:35px;line-height:38px;background:#cfecf9;padding-right:5px;">0.00</div>
<div class="c r" style="left:1248px;top:568px;width:102px;height:35px;line-height:38px;background:#cfecf9;padding-right:5px;">0.000</div>
<div class="c r" style="left:1350px;top:568px;width:102px;height:35px;line-height:38px;background:#cfecf9;padding-right:5px;">0.000</div>
<div class="c r" style="left:1452px;top:568px;width:86px;height:35px;line-height:38px;background:#cfecf9;">0</div>
<div class="c r" style="left:1538px;top:568px;width:120px;height:35px;line-height:38px;background:#cfecf9;padding-right:4.5px;">2203.54</div>
<div class="c r" style="left:1658px;top:568px;width:114px;height:35px;line-height:38px;background:#cfecf9;padding-right:4.5px;">235977.92</div>
<div class="c r" style="left:1772px;top:568px;width:88px;height:35px;line-height:38px;background:#cfecf9;padding-right:7px;">0</div>
<div class="c r" style="left:1860px;top:568px;width:89px;height:35px;line-height:38px;background:#cfecf9;padding-right:7px;">0</div>
<div class="c r" style="left:1949px;top:568px;width:92px;height:35px;line-height:38px;background:#cfecf9;"></div>
<div class="rh" style="top:603px;height:34px;line-height:37px;text-align:right;padding-right:9px"><span style="position:absolute;left:-14.8px;width:40px;text-align:center">4</span></div>
<div class="c l" style="left:28px;top:603px;width:150px;height:34px;line-height:37px;background:#fff;padding-left:36px;">410649</div>
<div class="c m" style="left:178px;top:603px;width:60px;height:34px;line-height:37px;background:#fff;padding-left:3px;">材料</div>
<div class="c l" style="left:238px;top:603px;width:650px;height:34px;line-height:37px;background:#fff;">水</div>
<div class="c l" style="left:888px;top:603px;width:180px;height:34px;line-height:37px;background:#fff;"></div>
<div class="c m" style="left:1068px;top:603px;width:60px;height:34px;line-height:37px;background:#fff;">m3</div>
<div class="c r" style="left:1128px;top:603px;width:120px;height:34px;line-height:37px;background:#fff;padding-right:5px;">4.38</div>
<div class="c r red" style="left:1248px;top:603px;width:102px;height:34px;line-height:37px;background:#fff;padding-right:5px;">3.960</div>
<div class="c r" style="left:1350px;top:603px;width:102px;height:34px;line-height:37px;background:#fff;padding-right:5px;">4.320</div>
<div class="c r" style="left:1452px;top:603px;width:86px;height:34px;line-height:37px;background:#fff;">2.601536</div>
<div class="c r" style="left:1538px;top:603px;width:120px;height:34px;line-height:37px;background:#fff;padding-right:4.5px;">11.39</div>
<div class="c r" style="left:1658px;top:603px;width:114px;height:34px;line-height:37px;background:#fff;padding-right:4.5px;">10.30</div>
<div class="c r" style="left:1772px;top:603px;width:88px;height:34px;line-height:37px;background:#fff;padding-right:7px;">1</div>
<div class="c r" style="left:1860px;top:603px;width:89px;height:34px;line-height:37px;background:#fff;padding-right:7px;">7.804608</div>
<div class="c r" style="left:1949px;top:603px;width:92px;height:34px;line-height:37px;background:#fff;"></div>
<div class="rh" style="top:637px;height:35px;line-height:38px;text-align:right;padding-right:9px"><span style="position:absolute;left:-14.8px;width:40px;text-align:center">5</span></div>
<div class="c l" style="left:28px;top:637px;width:150px;height:35px;line-height:38px;background:#fff;padding-left:36px;">050005</div>
<div class="c m" style="left:178px;top:637px;width:60px;height:35px;line-height:38px;background:#fff;padding-left:3px;">材料</div>
<div class="c l" style="left:238px;top:637px;width:650px;height:35px;line-height:38px;background:#fff;">板方材</div>
<div class="c l" style="left:888px;top:637px;width:180px;height:35px;line-height:38px;background:#fff;"></div>
<div class="c m" style="left:1068px;top:637px;width:60px;height:35px;line-height:38px;background:#fff;">m3</div>
<div class="c r" style="left:1128px;top:637px;width:120px;height:35px;line-height:38px;background:#fff;padding-right:5px;">1280.00</div>
<div class="c r blu" style="left:1248px;top:637px;width:102px;height:35px;line-height:38px;background:#fff;padding-right:5px;">1466.530</div>
<div class="c r" style="left:1350px;top:637px;width:102px;height:35px;line-height:38px;background:#fff;padding-right:5px;">1656.450</div>
<div class="c r" style="left:1452px;top:637px;width:86px;height:35px;line-height:38px;background:#fff;">0.010304</div>
<div class="c r" style="left:1538px;top:637px;width:120px;height:35px;line-height:38px;background:#fff;padding-right:4.5px;">13.19</div>
<div class="c r" style="left:1658px;top:637px;width:114px;height:35px;line-height:38px;background:#fff;padding-right:4.5px;">15.11</div>
<div class="c r" style="left:1772px;top:637px;width:88px;height:35px;line-height:38px;background:#fff;padding-right:7px;">1</div>
<div class="c r" style="left:1860px;top:637px;width:89px;height:35px;line-height:38px;background:#fff;padding-right:7px;">0.030912</div>
<div class="c r" style="left:1949px;top:637px;width:92px;height:35px;line-height:38px;background:#fff;"></div>
<div class="rh" style="top:672px;height:34px;line-height:37px;text-align:right;padding-right:9px"><span style="position:absolute;left:-14.8px;width:40px;text-align:center">6</span></div>
<div class="c l" style="left:28px;top:672px;width:150px;height:34px;line-height:37px;background:#fff;padding-left:36px;">040017</div>
<div class="c m" style="left:178px;top:672px;width:60px;height:34px;line-height:37px;background:#fff;padding-left:3px;">材料</div>
<div class="c l" style="left:238px;top:672px;width:650px;height:34px;line-height:37px;background:#fff;">标准砖</div>
<div class="c l" style="left:888px;top:672px;width:180px;height:34px;line-height:37px;background:#fff;">240*115*53mm</div>
<div class="c m" style="left:1068px;top:672px;width:60px;height:34px;line-height:37px;background:#fff;">千块</div>
<div class="c r" style="left:1128px;top:672px;width:120px;height:34px;line-height:37px;background:#fff;padding-right:5px;">410.00</div>
<div class="c r red" style="left:1248px;top:672px;width:102px;height:34px;line-height:37px;background:#fff;padding-right:5px;">255.870</div>
<div class="c r" style="left:1350px;top:672px;width:102px;height:34px;line-height:37px;background:#fff;padding-right:5px;">289.000</div>
<div class="c r" style="left:1452px;top:672px;width:86px;height:34px;line-height:37px;background:#fff;">1.642368</div>
<div class="c r" style="left:1538px;top:672px;width:120px;height:34px;line-height:37px;background:#fff;padding-right:4.5px;">673.37</div>
<div class="c r" style="left:1658px;top:672px;width:114px;height:34px;line-height:37px;background:#fff;padding-right:4.5px;">420.23</div>
<div class="c r" style="left:1772px;top:672px;width:88px;height:34px;line-height:37px;background:#fff;padding-right:7px;">1</div>
<div class="c r" style="left:1860px;top:672px;width:89px;height:34px;line-height:37px;background:#fff;padding-right:7px;">4.927104</div>
<div class="c r" style="left:1949px;top:672px;width:92px;height:34px;line-height:37px;background:#fff;"></div>
<div class="rh" style="top:706px;height:35px;line-height:38px;text-align:right;padding-right:9px"><span style="position:absolute;left:-14.8px;width:40px;text-align:center">7</span></div>
<div class="c l" style="left:28px;top:706px;width:150px;height:35px;line-height:38px;background:#fff;padding-left:36px;">410986</div>
<div class="c m" style="left:178px;top:706px;width:60px;height:35px;line-height:38px;background:#fff;padding-left:3px;">材料</div>
<div class="c l" style="left:238px;top:706px;width:650px;height:35px;line-height:38px;background:#fff;">圆钉</div>
<div class="c l" style="left:888px;top:706px;width:180px;height:35px;line-height:38px;background:#fff;"></div>
<div class="c m" style="left:1068px;top:706px;width:60px;height:35px;line-height:38px;background:#fff;">kg</div>
<div class="c r" style="left:1128px;top:706px;width:120px;height:35px;line-height:38px;background:#fff;padding-right:5px;">6.00</div>
<div class="c r red" style="left:1248px;top:706px;width:102px;height:35px;line-height:38px;background:#fff;padding-right:5px;">5.310</div>
<div class="c r" style="left:1350px;top:706px;width:102px;height:35px;line-height:38px;background:#fff;padding-right:5px;">6.000</div>
<div class="c r" style="left:1452px;top:706px;width:86px;height:35px;line-height:38px;background:#fff;">1.183616</div>
<div class="c r" style="left:1538px;top:706px;width:120px;height:35px;line-height:38px;background:#fff;padding-right:4.5px;">7.10</div>
<div class="c r" style="left:1658px;top:706px;width:114px;height:35px;line-height:38px;background:#fff;padding-right:4.5px;">6.29</div>
<div class="c r" style="left:1772px;top:706px;width:88px;height:35px;line-height:38px;background:#fff;padding-right:7px;">1</div>
<div class="c r" style="left:1860px;top:706px;width:89px;height:35px;line-height:38px;background:#fff;padding-right:7px;">3.550848</div>
<div class="c r" style="left:1949px;top:706px;width:92px;height:35px;line-height:38px;background:#fff;"></div>
<div class="rh" style="top:741px;height:34px;line-height:37px;text-align:right;padding-right:9px"><span style="position:absolute;left:-14.8px;width:40px;text-align:center">8</span></div>
<div class="c l" style="left:28px;top:741px;width:150px;height:34px;line-height:37px;background:#fff;padding-left:36px;">P2-49</div>
<div class="c m" style="left:178px;top:741px;width:60px;height:34px;line-height:37px;background:#fff;padding-left:3px;">材料</div>
<div class="c l" style="left:238px;top:741px;width:650px;height:34px;line-height:37px;background:#fff;">现浇及现场砼</div>
<div class="c l" style="left:888px;top:741px;width:180px;height:34px;line-height:37px;background:#fff;">砾40 C30 水泥42.5</div>
<div class="c m" style="left:1068px;top:741px;width:60px;height:34px;line-height:37px;background:#fff;">m3</div>
<div class="c r" style="left:1128px;top:741px;width:120px;height:34px;line-height:37px;background:#fff;padding-right:5px;">342.45</div>
<div class="c r blu" style="left:1248px;top:741px;width:102px;height:34px;line-height:37px;background:#fff;padding-right:5px;">374.110</div>
<div class="c r" style="left:1350px;top:741px;width:102px;height:34px;line-height:37px;background:#fff;padding-right:5px;">398.620</div>
<div class="c r" style="left:1452px;top:741px;width:86px;height:34px;line-height:37px;background:#fff;">0.032256</div>
<div class="c r" style="left:1538px;top:741px;width:120px;height:34px;line-height:37px;background:#fff;padding-right:4.5px;">11.05</div>
<div class="c r" style="left:1658px;top:741px;width:114px;height:34px;line-height:37px;background:#fff;padding-right:4.5px;">12.07</div>
<div class="c r" style="left:1772px;top:741px;width:88px;height:34px;line-height:37px;background:#fff;padding-right:7px;">1</div>
<div class="c r" style="left:1860px;top:741px;width:89px;height:34px;line-height:37px;background:#fff;padding-right:7px;">0.096768</div>
<div class="c r" style="left:1949px;top:741px;width:92px;height:34px;line-height:37px;background:#fff;"></div>
<div class="rh" style="top:775px;height:35px;line-height:38px;text-align:right;padding-right:9px"><span style="position:absolute;left:-14.8px;width:40px;text-align:center">9</span></div>
<div class="c l" style="left:28px;top:775px;width:150px;height:35px;line-height:38px;background:#fff;padding-left:36px;">410015</div>
<div class="c m" style="left:178px;top:775px;width:60px;height:35px;line-height:38px;background:#fff;padding-left:3px;">材料</div>
<div class="c l" style="left:238px;top:775px;width:650px;height:35px;line-height:38px;background:#fff;">草袋</div>
<div class="c l" style="left:888px;top:775px;width:180px;height:35px;line-height:38px;background:#fff;"></div>
<div class="c m" style="left:1068px;top:775px;width:60px;height:35px;line-height:38px;background:#fff;">个</div>
<div class="c r" style="left:1128px;top:775px;width:120px;height:35px;line-height:38px;background:#fff;padding-right:5px;">2.00</div>
<div class="c r red" style="left:1248px;top:775px;width:102px;height:35px;line-height:38px;background:#fff;padding-right:5px;">1.770</div>
<div class="c r" style="left:1350px;top:775px;width:102px;height:35px;line-height:38px;background:#fff;padding-right:5px;">2.000</div>
<div class="c r" style="left:1452px;top:775px;width:86px;height:35px;line-height:38px;background:#fff;">9.299584</div>
<div class="c r" style="left:1538px;top:775px;width:120px;height:35px;line-height:38px;background:#fff;padding-right:4.5px;">18.60</div>
<div class="c r" style="left:1658px;top:775px;width:114px;height:35px;line-height:38px;background:#fff;padding-right:4.5px;">16.46</div>
<div class="c r" style="left:1772px;top:775px;width:88px;height:35px;line-height:38px;background:#fff;padding-right:7px;">1</div>
<div class="c r" style="left:1860px;top:775px;width:89px;height:35px;line-height:38px;background:#fff;padding-right:7px;">27.898...</div>
<div class="c r" style="left:1949px;top:775px;width:92px;height:35px;line-height:38px;background:#fff;"></div>
<div class="rh" style="top:810px;height:34px;line-height:37px;text-align:right;padding-right:9px"><span style="position:absolute;left:-14.8px;width:40px;text-align:center">10</span></div>
<div class="c l" style="left:28px;top:810px;width:150px;height:34px;line-height:37px;background:#fff;padding-left:36px;">P2-43</div>
<div class="c m" style="left:178px;top:810px;width:60px;height:34px;line-height:37px;background:#fff;padding-left:3px;">材料</div>
<div class="c l" style="left:238px;top:810px;width:650px;height:34px;line-height:37px;background:#fff;">现浇及现场砼</div>
<div class="c l" style="left:888px;top:810px;width:180px;height:34px;line-height:37px;background:#fff;">砾40 C15 水泥32.5</div>
<div class="c m" style="left:1068px;top:810px;width:60px;height:34px;line-height:37px;background:#fff;">m3</div>
<div class="c r" style="left:1128px;top:810px;width:120px;height:34px;line-height:37px;background:#fff;padding-right:5px;">308.19</div>
<div class="c r blu" style="left:1248px;top:810px;width:102px;height:34px;line-height:37px;background:#fff;padding-right:5px;">376.860</div>
<div class="c r" style="left:1350px;top:810px;width:102px;height:34px;line-height:37px;background:#fff;padding-right:5px;">399.330</div>
<div class="c r" style="left:1452px;top:810px;width:86px;height:34px;line-height:37px;background:#fff;">1.177792</div>
<div class="c r" style="left:1538px;top:810px;width:120px;height:34px;line-height:37px;background:#fff;padding-right:4.5px;">362.98</div>
<div class="c r" style="left:1658px;top:810px;width:114px;height:34px;line-height:37px;background:#fff;padding-right:4.5px;">443.86</div>
<div class="c r" style="left:1772px;top:810px;width:88px;height:34px;line-height:37px;background:#fff;padding-right:7px;">1</div>
<div class="c r" style="left:1860px;top:810px;width:89px;height:34px;line-height:37px;background:#fff;padding-right:7px;">3.533376</div>
<div class="c r" style="left:1949px;top:810px;width:92px;height:34px;line-height:37px;background:#fff;"></div>
<div class="rh" style="top:844px;height:35px;line-height:38px;text-align:right;padding-right:9px"><span style="position:absolute;left:-14.8px;width:40px;text-align:center">11</span></div>
<div class="c l" style="left:28px;top:844px;width:150px;height:35px;line-height:38px;background:#fff;padding-left:36px;">P9-13</div>
<div class="c m" style="left:178px;top:844px;width:60px;height:35px;line-height:38px;background:#fff;padding-left:3px;">材料</div>
<div class="c l" style="left:238px;top:844px;width:650px;height:35px;line-height:38px;background:#fff;">水泥砂浆(水泥32.5级) 强度等级 M7.5</div>
<div class="c l" style="left:888px;top:844px;width:180px;height:35px;line-height:38px;background:#fff;"></div>
<div class="c m" style="left:1068px;top:844px;width:60px;height:35px;line-height:38px;background:#fff;">m3</div>
<div class="c r" style="left:1128px;top:844px;width:120px;height:35px;line-height:38px;background:#fff;padding-right:5px;">266.68</div>
<div class="c r blu" style="left:1248px;top:844px;width:102px;height:35px;line-height:38px;background:#fff;padding-right:5px;">463.870</div>
<div class="c r" style="left:1350px;top:844px;width:102px;height:35px;line-height:38px;background:#fff;padding-right:5px;">489.140</div>
<div class="c r" style="left:1452px;top:844px;width:86px;height:35px;line-height:38px;background:#fff;">0.783552</div>
<div class="c r" style="left:1538px;top:844px;width:120px;height:35px;line-height:38px;background:#fff;padding-right:4.5px;">208.96</div>
<div class="c r" style="left:1658px;top:844px;width:114px;height:35px;line-height:38px;background:#fff;padding-right:4.5px;">363.47</div>
<div class="c r" style="left:1772px;top:844px;width:88px;height:35px;line-height:38px;background:#fff;padding-right:7px;">1</div>
<div class="c r" style="left:1860px;top:844px;width:89px;height:35px;line-height:38px;background:#fff;padding-right:7px;">2.350656</div>
<div class="c r" style="left:1949px;top:844px;width:92px;height:35px;line-height:38px;background:#fff;"></div>
<div class="rh" style="top:879px;height:34px;line-height:37px;text-align:right;padding-right:9px"><span style="position:absolute;left:-14.8px;width:40px;text-align:center">12</span></div>
<div class="c l" style="left:28px;top:879px;width:150px;height:34px;line-height:37px;background:#fff;padding-left:36px;">011322</div>
<div class="c m" style="left:178px;top:879px;width:60px;height:34px;line-height:37px;background:#fff;padding-left:3px;">材料</div>
<div class="c l" style="left:238px;top:879px;width:650px;height:34px;line-height:37px;background:#fff;">电焊条</div>
<div class="c l" style="left:888px;top:879px;width:180px;height:34px;line-height:37px;background:#fff;"></div>
<div class="c m" style="left:1068px;top:879px;width:60px;height:34px;line-height:37px;background:#fff;">kg</div>
<div class="c r" style="left:1128px;top:879px;width:120px;height:34px;line-height:37px;background:#fff;padding-right:5px;">7.00</div>
<div class="c r blu" style="left:1248px;top:879px;width:102px;height:34px;line-height:37px;background:#fff;padding-right:5px;">6.200</div>
<div class="c r" style="left:1350px;top:879px;width:102px;height:34px;line-height:37px;background:#fff;padding-right:5px;">7.000</div>
<div class="c r" style="left:1452px;top:879px;width:86px;height:34px;line-height:37px;background:#fff;">0.361088</div>
<div class="c r" style="left:1538px;top:879px;width:120px;height:34px;line-height:37px;background:#fff;padding-right:4.5px;">2.53</div>
<div class="c r" style="left:1658px;top:879px;width:114px;height:34px;line-height:37px;background:#fff;padding-right:4.5px;">2.24</div>
<div class="c r" style="left:1772px;top:879px;width:88px;height:34px;line-height:37px;background:#fff;padding-right:7px;">1</div>
<div class="c r" style="left:1860px;top:879px;width:89px;height:34px;line-height:37px;background:#fff;padding-right:7px;">1.083264</div>
<div class="c r" style="left:1949px;top:879px;width:92px;height:34px;line-height:37px;background:#fff;"></div>
<div class="rh" style="top:913px;height:35px;line-height:38px;text-align:right;padding-right:9px"><span style="position:absolute;left:-14.8px;width:40px;text-align:center">13</span></div>
<div class="c l" style="left:28px;top:913px;width:150px;height:35px;line-height:38px;background:#fff;padding-left:36px;">P2-47</div>
<div class="c m" style="left:178px;top:913px;width:60px;height:35px;line-height:38px;background:#fff;padding-left:3px;">材料</div>
<div class="c l" style="left:238px;top:913px;width:650px;height:35px;line-height:38px;background:#fff;">现浇及现场砼</div>
<div class="c l" style="left:888px;top:913px;width:180px;height:35px;line-height:38px;background:#fff;">砾40 C25 水泥32.5</div>
<div class="c m" style="left:1068px;top:913px;width:60px;height:35px;line-height:38px;background:#fff;">m3</div>
<div class="c r" style="left:1128px;top:913px;width:120px;height:35px;line-height:38px;background:#fff;padding-right:5px;">336.95</div>
<div class="c r blu" style="left:1248px;top:913px;width:102px;height:35px;line-height:38px;background:#fff;padding-right:5px;">375.440</div>
<div class="c r" style="left:1350px;top:913px;width:102px;height:35px;line-height:38px;background:#fff;padding-right:5px;">401.650</div>
<div class="c r" style="left:1452px;top:913px;width:86px;height:35px;line-height:38px;background:#fff;">0.559104</div>
<div class="c r" style="left:1538px;top:913px;width:120px;height:35px;line-height:38px;background:#fff;padding-right:4.5px;">188.39</div>
<div class="c r" style="left:1658px;top:913px;width:114px;height:35px;line-height:38px;background:#fff;padding-right:4.5px;">209.91</div>
<div class="c r" style="left:1772px;top:913px;width:88px;height:35px;line-height:38px;background:#fff;padding-right:7px;">1</div>
<div class="c r" style="left:1860px;top:913px;width:89px;height:35px;line-height:38px;background:#fff;padding-right:7px;">1.677312</div>
<div class="c r" style="left:1949px;top:913px;width:92px;height:35px;line-height:38px;background:#fff;"></div>
<div class="rh" style="top:948px;height:34px;line-height:37px;text-align:right;padding-right:9px"><span style="position:absolute;left:-14.8px;width:40px;text-align:center">14</span></div>
<div class="c l" style="left:28px;top:948px;width:150px;height:34px;line-height:37px;background:#fff;padding-left:36px;">P10-3</div>
<div class="c m" style="left:178px;top:948px;width:60px;height:34px;line-height:37px;background:#fff;padding-left:3px;">材料</div>
<div class="c l" style="left:238px;top:948px;width:650px;height:34px;line-height:37px;background:#fff;">水泥砂浆</div>
<div class="c l" style="left:888px;top:948px;width:180px;height:34px;line-height:37px;background:#fff;">1:2</div>
<div class="c m" style="left:1068px;top:948px;width:60px;height:34px;line-height:37px;background:#fff;">m3</div>
<div class="c r" style="left:1128px;top:948px;width:120px;height:34px;line-height:37px;background:#fff;padding-right:5px;">374.40</div>
<div class="c r blu" style="left:1248px;top:948px;width:102px;height:34px;line-height:37px;background:#fff;padding-right:5px;">383.880</div>
<div class="c r" style="left:1350px;top:948px;width:102px;height:34px;line-height:37px;background:#fff;padding-right:5px;">416.330</div>
<div class="c r" style="left:1452px;top:948px;width:86px;height:34px;line-height:37px;background:#fff;">0.128576</div>
<div class="c r" style="left:1538px;top:948px;width:120px;height:34px;line-height:37px;background:#fff;padding-right:4.5px;">48.14</div>
<div class="c r" style="left:1658px;top:948px;width:114px;height:34px;line-height:37px;background:#fff;padding-right:4.5px;">49.36</div>
<div class="c r" style="left:1772px;top:948px;width:88px;height:34px;line-height:37px;background:#fff;padding-right:7px;">1</div>
<div class="c r" style="left:1860px;top:948px;width:89px;height:34px;line-height:37px;background:#fff;padding-right:7px;">0.385728</div>
<div class="c r" style="left:1949px;top:948px;width:92px;height:34px;line-height:37px;background:#fff;"></div>
<div class="rh" style="top:982px;height:35px;line-height:38px;text-align:right;padding-right:9px"><span style="position:absolute;left:-14.8px;width:40px;text-align:center">15</span></div>
<div class="c l" style="left:28px;top:982px;width:150px;height:35px;line-height:38px;background:#fff;padding-left:36px;">411015</div>
<div class="c m" style="left:178px;top:982px;width:60px;height:35px;line-height:38px;background:#fff;padding-left:3px;">材料</div>
<div class="c l" style="left:238px;top:982px;width:650px;height:35px;line-height:38px;background:#fff;">塑钢踏步</div>
<div class="c l" style="left:888px;top:982px;width:180px;height:35px;line-height:38px;background:#fff;"></div>
<div class="c m" style="left:1068px;top:982px;width:60px;height:35px;line-height:38px;background:#fff;">个</div>
<div class="c r" style="left:1128px;top:982px;width:120px;height:35px;line-height:38px;background:#fff;padding-right:5px;">13.00</div>
<div class="c r blu" style="left:1248px;top:982px;width:102px;height:35px;line-height:38px;background:#fff;padding-right:5px;">11.510</div>
<div class="c r" style="left:1350px;top:982px;width:102px;height:35px;line-height:38px;background:#fff;padding-right:5px;">13.000</div>
<div class="c r" style="left:1452px;top:982px;width:86px;height:35px;line-height:38px;background:#fff;">2.688</div>
<div class="c r" style="left:1538px;top:982px;width:120px;height:35px;line-height:38px;background:#fff;padding-right:4.5px;">34.94</div>
<div class="c r" style="left:1658px;top:982px;width:114px;height:35px;line-height:38px;background:#fff;padding-right:4.5px;">30.94</div>
<div class="c r" style="left:1772px;top:982px;width:88px;height:35px;line-height:38px;background:#fff;padding-right:7px;">1</div>
<div class="c r" style="left:1860px;top:982px;width:89px;height:35px;line-height:38px;background:#fff;padding-right:7px;">8.064</div>
<div class="c r" style="left:1949px;top:982px;width:92px;height:35px;line-height:38px;background:#fff;"></div>
<div class="rh" style="top:1017px;height:34px;line-height:37px;text-align:right;padding-right:9px"><span style="position:absolute;left:-14.8px;width:40px;text-align:center">16</span></div>
<div class="c l" style="left:28px;top:1017px;width:150px;height:34px;line-height:37px;background:#fff;padding-left:36px;">011453</div>
<div class="c m" style="left:178px;top:1017px;width:60px;height:34px;line-height:37px;background:#fff;padding-left:3px;">材料</div>
<div class="c l" style="left:238px;top:1017px;width:650px;height:34px;line-height:37px;background:#fff;">镀锌铁丝</div>
<div class="c l" style="left:888px;top:1017px;width:180px;height:34px;line-height:37px;background:#fff;">22#</div>
<div class="c m" style="left:1068px;top:1017px;width:60px;height:34px;line-height:37px;background:#fff;">kg</div>
<div class="c r" style="left:1128px;top:1017px;width:120px;height:34px;line-height:37px;background:#fff;padding-right:5px;">5.75</div>
<div class="c r red" style="left:1248px;top:1017px;width:102px;height:34px;line-height:37px;background:#fff;padding-right:5px;">5.090</div>
<div class="c r" style="left:1350px;top:1017px;width:102px;height:34px;line-height:37px;background:#fff;padding-right:5px;">5.750</div>
<div class="c r" style="left:1452px;top:1017px;width:86px;height:34px;line-height:37px;background:#fff;">0.148288</div>
<div class="c r" style="left:1538px;top:1017px;width:120px;height:34px;line-height:37px;background:#fff;padding-right:4.5px;">0.85</div>
<div class="c r" style="left:1658px;top:1017px;width:114px;height:34px;line-height:37px;background:#fff;padding-right:4.5px;">0.75</div>
<div class="c r" style="left:1772px;top:1017px;width:88px;height:34px;line-height:37px;background:#fff;padding-right:7px;">1</div>
<div class="c r" style="left:1860px;top:1017px;width:89px;height:34px;line-height:37px;background:#fff;padding-right:7px;">0.444864</div>
<div class="c r" style="left:1949px;top:1017px;width:92px;height:34px;line-height:37px;background:#fff;"></div>
<div class="rh" style="top:1051px;height:35px;line-height:38px;text-align:right;padding-right:9px"><span style="position:absolute;left:-14.8px;width:40px;text-align:center">17</span></div>
<div class="c l" style="left:28px;top:1051px;width:150px;height:35px;line-height:38px;background:#fff;padding-left:36px;">010417</div>
<div class="c m" style="left:178px;top:1051px;width:60px;height:35px;line-height:38px;background:#fff;padding-left:3px;">材料</div>
<div class="c l" style="left:238px;top:1051px;width:650px;height:35px;line-height:38px;background:#fff;">防盗铸铁井盖井座</div>
<div class="c l" style="left:888px;top:1051px;width:180px;height:35px;line-height:38px;background:#fff;"></div>
<div class="c m" style="left:1068px;top:1051px;width:60px;height:35px;line-height:38px;background:#fff;">套</div>
<div class="c r" style="left:1128px;top:1051px;width:120px;height:35px;line-height:38px;background:#fff;padding-right:5px;">680.00</div>
<div class="c r red" style="left:1248px;top:1051px;width:102px;height:35px;line-height:38px;background:#fff;padding-right:5px;">182.200</div>
<div class="c r" style="left:1350px;top:1051px;width:102px;height:35px;line-height:38px;background:#fff;padding-right:5px;">205.800</div>
<div class="c r" style="left:1452px;top:1051px;width:86px;height:35px;line-height:38px;background:#fff;">0.448</div>
<div class="c r" style="left:1538px;top:1051px;width:120px;height:35px;line-height:38px;background:#fff;padding-right:4.5px;">304.64</div>
<div class="c r" style="left:1658px;top:1051px;width:114px;height:35px;line-height:38px;background:#fff;padding-right:4.5px;">81.63</div>
<div class="c r" style="left:1772px;top:1051px;width:88px;height:35px;line-height:38px;background:#fff;padding-right:7px;">1</div>
<div class="c r" style="left:1860px;top:1051px;width:89px;height:35px;line-height:38px;background:#fff;padding-right:7px;">1.344</div>
<div class="c r" style="left:1949px;top:1051px;width:92px;height:35px;line-height:38px;background:#fff;"></div>
<div class="rh" style="top:1086px;height:34px;line-height:37px;text-align:right;padding-right:9px"><span style="position:absolute;left:-14.8px;width:40px;text-align:center">18</span></div>
<div class="c l" style="left:28px;top:1086px;width:150px;height:34px;line-height:37px;background:#fff;padding-left:36px;">110025</div>
<div class="c m" style="left:178px;top:1086px;width:60px;height:34px;line-height:37px;background:#fff;padding-left:3px;">材料</div>
<div class="c l" style="left:238px;top:1086px;width:650px;height:34px;line-height:37px;background:#fff;">防水粉</div>
<div class="c l" style="left:888px;top:1086px;width:180px;height:34px;line-height:37px;background:#fff;"></div>
<div class="c m" style="left:1068px;top:1086px;width:60px;height:34px;line-height:37px;background:#fff;">kg</div>
<div class="c r" style="left:1128px;top:1086px;width:120px;height:34px;line-height:37px;background:#fff;padding-right:5px;">1.30</div>
<div class="c r red" style="left:1248px;top:1086px;width:102px;height:34px;line-height:37px;background:#fff;padding-right:5px;">1.150</div>
<div class="c r" style="left:1350px;top:1086px;width:102px;height:34px;line-height:37px;background:#fff;padding-right:5px;">1.300</div>
<div class="c r" style="left:1452px;top:1086px;width:86px;height:34px;line-height:37px;background:#fff;">3.54368</div>
<div class="c r" style="left:1538px;top:1086px;width:120px;height:34px;line-height:37px;background:#fff;padding-right:4.5px;">4.61</div>
<div class="c r" style="left:1658px;top:1086px;width:114px;height:34px;line-height:37px;background:#fff;padding-right:4.5px;">4.08</div>
<div class="c r" style="left:1772px;top:1086px;width:88px;height:34px;line-height:37px;background:#fff;padding-right:7px;">1</div>
<div class="c r" style="left:1860px;top:1086px;width:89px;height:34px;line-height:37px;background:#fff;padding-right:7px;">10.63104</div>
<div class="c r" style="left:1949px;top:1086px;width:92px;height:34px;line-height:37px;background:#fff;"></div>
<div class="rh" style="top:1120px;height:35px;line-height:38px;text-align:right;padding-right:9px"><span style="position:absolute;left:-14.8px;width:40px;text-align:center">19</span></div>
<div class="c l" style="left:28px;top:1120px;width:150px;height:35px;line-height:38px;background:#fff;padding-left:36px;">010519</div>
<div class="c m" style="left:178px;top:1120px;width:60px;height:35px;line-height:38px;background:#fff;padding-left:3px;">材料</div>
<div class="c l" style="left:238px;top:1120px;width:650px;height:35px;line-height:38px;background:#fff;">钢筋 Φ10 以外</div>
<div class="c l" style="left:888px;top:1120px;width:180px;height:35px;line-height:38px;background:#fff;"></div>
<div class="c m" style="left:1068px;top:1120px;width:60px;height:35px;line-height:38px;background:#fff;">t</div>
<div class="c r" style="left:1128px;top:1120px;width:120px;height:35px;line-height:38px;background:#fff;padding-right:5px;">4.60</div>
<div class="c r blu" style="left:1248px;top:1120px;width:102px;height:35px;line-height:38px;background:#fff;padding-right:5px;">3419.920</div>
<div class="c r" style="left:1350px;top:1120px;width:102px;height:35px;line-height:38px;background:#fff;padding-right:5px;">3862.800</div>
<div class="c r" style="left:1452px;top:1120px;width:86px;height:35px;line-height:38px;background:#fff;">68</div>
<div class="c r" style="left:1538px;top:1120px;width:120px;height:35px;line-height:38px;background:#fff;padding-right:4.5px;">312.80</div>
<div class="c r" style="left:1658px;top:1120px;width:114px;height:35px;line-height:38px;background:#fff;padding-right:4.5px;">232554.56</div>
<div class="c r" style="left:1772px;top:1120px;width:88px;height:35px;line-height:38px;background:#fff;padding-right:7px;">1</div>
<div class="c r" style="left:1860px;top:1120px;width:89px;height:35px;line-height:38px;background:#fff;padding-right:7px;">204</div>
<div class="c r" style="left:1949px;top:1120px;width:92px;height:35px;line-height:38px;background:#fff;"></div>
<div class="rh" style="top:1155px;height:34px;line-height:37px;text-align:right;padding-right:9px"><span style="position:absolute;left:-14.8px;width:40px;text-align:center">20</span></div>
<div class="c l" style="left:28px;top:1155px;width:150px;height:34px;line-height:37px;background:#cfecf9;padding-left:6px;"><span class="tri"></span>机械</div>
<div class="c m" style="left:178px;top:1155px;width:60px;height:34px;line-height:37px;background:#cfecf9;padding-left:3px;"></div>
<div class="c l" style="left:238px;top:1155px;width:650px;height:34px;line-height:37px;background:#cfecf9;"></div>
<div class="c l" style="left:888px;top:1155px;width:180px;height:34px;line-height:37px;background:#cfecf9;"></div>
<div class="c m" style="left:1068px;top:1155px;width:60px;height:34px;line-height:37px;background:#cfecf9;"></div>
<div class="c r" style="left:1128px;top:1155px;width:120px;height:34px;line-height:37px;background:#cfecf9;padding-right:5px;">0.00</div>
<div class="c r" style="left:1248px;top:1155px;width:102px;height:34px;line-height:37px;background:#cfecf9;padding-right:5px;">0.000</div>
<div class="c r" style="left:1350px;top:1155px;width:102px;height:34px;line-height:37px;background:#cfecf9;padding-right:5px;">0.000</div>
<div class="c r" style="left:1452px;top:1155px;width:86px;height:34px;line-height:37px;background:#cfecf9;">0</div>
<div class="c r" style="left:1538px;top:1155px;width:120px;height:34px;line-height:37px;background:#cfecf9;padding-right:4.5px;">54.93</div>
<div class="c r" style="left:1658px;top:1155px;width:114px;height:34px;line-height:37px;background:#cfecf9;padding-right:4.5px;">56.59</div>
<div class="c r" style="left:1772px;top:1155px;width:88px;height:34px;line-height:37px;background:#cfecf9;padding-right:7px;">0</div>
<div class="c r" style="left:1860px;top:1155px;width:89px;height:34px;line-height:37px;background:#cfecf9;padding-right:7px;">0</div>
<div class="c r" style="left:1949px;top:1155px;width:92px;height:34px;line-height:37px;background:#cfecf9;"></div>
<div class="rh" style="top:1189px;height:35px;line-height:38px;text-align:right;padding-right:9px"><span style="position:absolute;left:-14.8px;width:40px;text-align:center">21</span></div>
<div class="c l" style="left:28px;top:1189px;width:150px;height:35px;line-height:38px;background:#fff;padding-left:36px;">J4-30</div>
<div class="c m" style="left:178px;top:1189px;width:60px;height:35px;line-height:38px;background:#fff;padding-left:3px;">机械</div>
<div class="c l" style="left:238px;top:1189px;width:650px;height:35px;line-height:38px;background:#fff;">机动翻斗车 1t</div>
<div class="c l" style="left:888px;top:1189px;width:180px;height:35px;line-height:38px;background:#fff;"></div>
<div class="c m" style="left:1068px;top:1189px;width:60px;height:35px;line-height:38px;background:#fff;">台班</div>
<div class="c r" style="left:1128px;top:1189px;width:120px;height:35px;line-height:38px;background:#fff;padding-right:5px;">156.03</div>
<div class="c r blu" style="left:1248px;top:1189px;width:102px;height:35px;line-height:38px;background:#fff;padding-right:5px;">169.140</div>
<div class="c r" style="left:1350px;top:1189px;width:102px;height:35px;line-height:38px;background:#fff;padding-right:5px;">173.360</div>
<div class="c r" style="left:1452px;top:1189px;width:86px;height:35px;line-height:38px;background:#fff;">0.13</div>
<div class="c r" style="left:1538px;top:1189px;width:120px;height:35px;line-height:38px;background:#fff;padding-right:4.5px;">20.28</div>
<div class="c r" style="left:1658px;top:1189px;width:114px;height:35px;line-height:38px;background:#fff;padding-right:4.5px;">21.99</div>
<div class="c r" style="left:1772px;top:1189px;width:88px;height:35px;line-height:38px;background:#fff;padding-right:7px;">1</div>
<div class="c r" style="left:1860px;top:1189px;width:89px;height:35px;line-height:38px;background:#fff;padding-right:7px;">0.39</div>
<div class="c r" style="left:1949px;top:1189px;width:92px;height:35px;line-height:38px;background:#fff;"></div>
<div class="rh" style="top:1224px;height:34px;line-height:37px;text-align:right;padding-right:9px"><span style="position:absolute;left:-14.8px;width:40px;text-align:center">22</span></div>
<div class="c l" style="left:28px;top:1224px;width:150px;height:34px;line-height:37px;background:#fff;padding-left:36px;">410993</div>
<div class="c m" style="left:178px;top:1224px;width:60px;height:34px;line-height:37px;background:#fff;padding-left:3px;">机械</div>
<div class="c l" style="left:238px;top:1224px;width:650px;height:34px;line-height:37px;background:#fff;">其他机械费</div>
<div class="c l" style="left:888px;top:1224px;width:180px;height:34px;line-height:37px;background:#fff;"></div>
<div class="c m" style="left:1068px;top:1224px;width:60px;height:34px;line-height:37px;background:#fff;">元</div>
<div class="c r" style="left:1128px;top:1224px;width:120px;height:34px;line-height:37px;background:#fff;padding-right:5px;">1.00</div>
<div class="c r" style="left:1248px;top:1224px;width:102px;height:34px;line-height:37px;background:#fff;padding-right:5px;">1.000</div>
<div class="c r" style="left:1350px;top:1224px;width:102px;height:34px;line-height:37px;background:#fff;padding-right:5px;">1.000</div>
<div class="c r" style="left:1452px;top:1224px;width:86px;height:34px;line-height:37px;background:#fff;">7.2865</div>
<div class="c r" style="left:1538px;top:1224px;width:120px;height:34px;line-height:37px;background:#fff;padding-right:4.5px;">7.29</div>
<div class="c r" style="left:1658px;top:1224px;width:114px;height:34px;line-height:37px;background:#fff;padding-right:4.5px;">7.29</div>
<div class="c r" style="left:1772px;top:1224px;width:88px;height:34px;line-height:37px;background:#fff;padding-right:7px;">1</div>
<div class="c r" style="left:1860px;top:1224px;width:89px;height:34px;line-height:37px;background:#fff;padding-right:7px;">21.8595</div>
<div class="c r" style="left:1949px;top:1224px;width:92px;height:34px;line-height:37px;background:#fff;"></div>
<div class="rh" style="top:1258px;height:35px;line-height:38px;text-align:right;padding-right:9px"><span style="position:absolute;left:-14.8px;width:40px;text-align:center">23</span></div>
<div class="c l" style="left:28px;top:1258px;width:150px;height:35px;line-height:38px;background:#fff;padding-left:36px;">J6-6</div>
<div class="c m" style="left:178px;top:1258px;width:60px;height:35px;line-height:38px;background:#fff;padding-left:3px;">机械</div>
<div class="c l" style="left:238px;top:1258px;width:650px;height:35px;line-height:38px;background:#fff;">双锥反转出料混凝土搅拌机 350L</div>
<div class="c l" style="left:888px;top:1258px;width:180px;height:35px;line-height:38px;background:#fff;"></div>
<div class="c m" style="left:1068px;top:1258px;width:60px;height:35px;line-height:38px;background:#fff;">台班</div>
<div class="c r" style="left:1128px;top:1258px;width:120px;height:35px;line-height:38px;background:#fff;padding-right:5px;">142.55</div>
<div class="c r blu" style="left:1248px;top:1258px;width:102px;height:35px;line-height:38px;background:#fff;padding-right:5px;">162.680</div>
<div class="c r" style="left:1350px;top:1258px;width:102px;height:35px;line-height:38px;background:#fff;padding-right:5px;">166.980</div>
<div class="c r" style="left:1452px;top:1258px;width:86px;height:35px;line-height:38px;background:#fff;">0.16536</div>
<div class="c r" style="left:1538px;top:1258px;width:120px;height:35px;line-height:38px;background:#fff;padding-right:4.5px;">23.57</div>
<div class="c r" style="left:1658px;top:1258px;width:114px;height:35px;line-height:38px;background:#fff;padding-right:4.5px;">26.90</div>
<div class="c r" style="left:1772px;top:1258px;width:88px;height:35px;line-height:38px;background:#fff;padding-right:7px;">1</div>
<div class="c r" style="left:1860px;top:1258px;width:89px;height:35px;line-height:38px;background:#fff;padding-right:7px;">0.49608</div>
<div class="c r" style="left:1949px;top:1258px;width:92px;height:35px;line-height:38px;background:#fff;"></div>
<div class="rh" style="top:1293px;height:34px;line-height:37px;text-align:right;padding-right:9px"><span style="position:absolute;left:-14.8px;width:40px;text-align:center">24</span></div>
<div class="c l" style="left:28px;top:1293px;width:150px;height:34px;line-height:37px;background:#fff;padding-left:36px;">J6-56</div>
<div class="c m" style="left:178px;top:1293px;width:60px;height:34px;line-height:37px;background:#fff;padding-left:3px;">机械</div>
<div class="c l" style="left:238px;top:1293px;width:650px;height:34px;line-height:37px;background:#fff;">混凝土振动器 附着式</div>
<div class="c l" style="left:888px;top:1293px;width:180px;height:34px;line-height:37px;background:#fff;"></div>
<div class="c m" style="left:1068px;top:1293px;width:60px;height:34px;line-height:37px;background:#fff;">台班</div>
<div class="c r" style="left:1128px;top:1293px;width:120px;height:34px;line-height:37px;background:#fff;padding-right:5px;">11.47</div>
<div class="c r red" style="left:1248px;top:1293px;width:102px;height:34px;line-height:37px;background:#fff;padding-right:5px;">10.240</div>
<div class="c r" style="left:1350px;top:1293px;width:102px;height:34px;line-height:37px;background:#fff;padding-right:5px;">10.770</div>
<div class="c r" style="left:1452px;top:1293px;width:86px;height:34px;line-height:37px;background:#fff;">0.33072</div>
<div class="c r" style="left:1538px;top:1293px;width:120px;height:34px;line-height:37px;background:#fff;padding-right:4.5px;">3.79</div>
<div class="c r" style="left:1658px;top:1293px;width:114px;height:34px;line-height:37px;background:#fff;padding-right:4.5px;">3.39</div>
<div class="c r" style="left:1772px;top:1293px;width:88px;height:34px;line-height:37px;background:#fff;padding-right:7px;">1</div>
<div class="c r" style="left:1860px;top:1293px;width:89px;height:34px;line-height:37px;background:#fff;padding-right:7px;">0.99216</div>
<div class="c r" style="left:1949px;top:1293px;width:92px;height:34px;line-height:37px;background:#fff;"></div>
</body></html>
